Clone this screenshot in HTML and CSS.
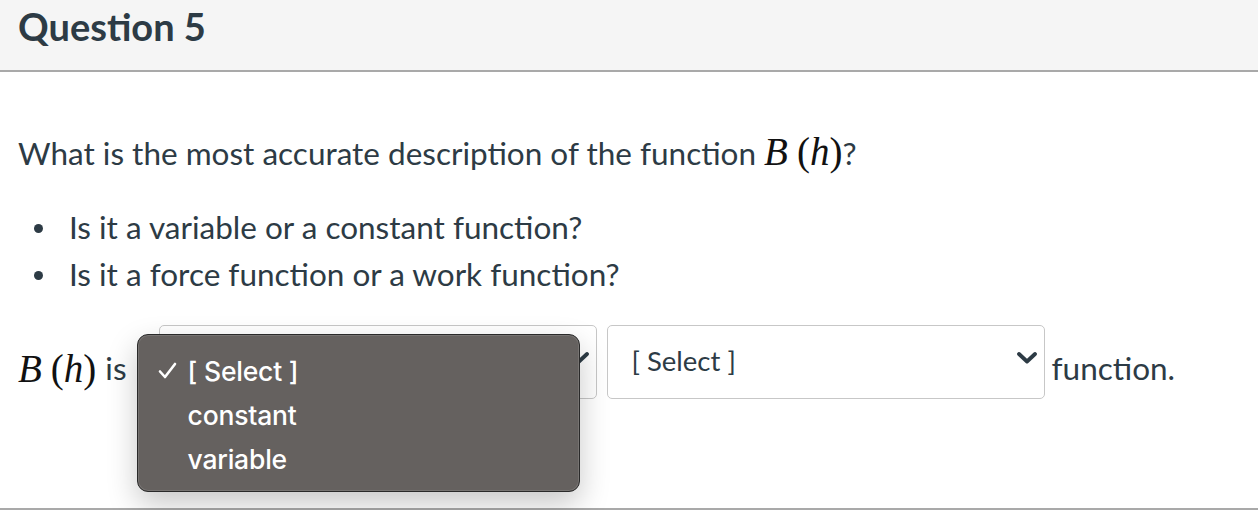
FILE: index.html
```html
<!DOCTYPE html>
<html>
  <head>
    <meta http-equiv="Content-type" content="text/html; charset=utf-8">
    <title>Question 5</title>
    <link rel="stylesheet" href="styles.css">
  </head>
  <body>
    <div class="question">
      <div class="question_header">
        <h2 class="question_title">Question 5</h2>
      </div>
      <div class="question_body">
        <p class="question_text">What is the most accurate description of the function <span class="math"><i>B</i><span class="paren">(<i>h</i>)</span></span>?</p>
        <ul class="hints">
          <li>Is it a variable or a constant function?</li>
          <li>Is it a force function or a work function?</li>
        </ul>
        <div class="answer_line">
          <span class="math lead"><i>B</i><span class="paren">(<i>h</i>)</span></span>
          <span class="word">is</span>
          <div class="select_wrap">
            <div class="select_box">
              <span class="select_label"></span>
              <svg class="chevron" width="20" height="12" viewBox="0 0 20 12"><path d="M2 2 L10 9.5 L18 2" fill="none" stroke="#2d3b45" stroke-width="3.8" stroke-linecap="round" stroke-linejoin="round"/></svg>
            </div>
            <div class="popup">
              <div class="popup_item"><svg class="tick" width="19" height="17" viewBox="0 0 19 17"><path d="M2 9.5 L7 15 L17 2" fill="none" stroke="#fff" stroke-width="2.6" stroke-linecap="round" stroke-linejoin="round"/></svg>[ Select ]</div>
              <div class="popup_item">constant</div>
              <div class="popup_item">variable</div>
            </div>
          </div>
          <div class="select_wrap second">
            <div class="select_box">
              <span class="select_label">[ Select ]</span>
              <svg class="chevron" width="20" height="12" viewBox="0 0 20 12"><path d="M2 2 L10 9.5 L18 2" fill="none" stroke="#2d3b45" stroke-width="3.8" stroke-linecap="round" stroke-linejoin="round"/></svg>
            </div>
          </div>
          <span class="word tail">function.</span>
        </div>
      </div>
    </div>
  </body>
</html>
```

FILE: styles.css
```css
body,html{margin:0; background:#fff;}
body{font-family:Lato,"Noto Sans",sans-serif; color:#2d3b45;}
.question{border-bottom:2px solid #a9a9a9; width:1258px;}
.question_header{height:72px; background:#f5f5f5; border-bottom:2px solid #a9a9a9; padding:0 18px; box-sizing:border-box;}
.question_title{margin:0; padding-top:3px; font-size:38px; font-weight:700; line-height:46px;}
.question_body{padding:0 18px 109px 18px;}
.question_text{margin:56px 0 0 0; font-size:31.5px; line-height:47px;}
.math{font-family:"Liberation Serif","Times New Roman",serif; font-size:39px; color:#111;}
.math i{font-style:italic;}
.paren{margin-left:9px;}
.hints{margin:27px 0 0 0; padding:0; list-style:none; font-size:31.5px; line-height:47px;}
.hints li{display:flex; align-items:center;}
.hints li::before{content:""; width:9px; height:9px; border-radius:50%; background:#2d3b45; margin:2px 26px 0 16px;}
.answer_line{display:flex; align-items:flex-start; margin-top:27px; font-size:31.5px; line-height:47px;}
.answer_line .lead{margin-top:20px; margin-right:9px;}
.word{margin-top:20px;}
.select_wrap{position:relative; margin-left:32px;}
.select_wrap.second{margin-left:10px;}
.tail{margin-left:7px;}
.select_box{width:438px; height:74px; box-sizing:border-box; border:1.5px solid #c7c7c7; border-radius:5px; background:#fff; display:flex; align-items:center; justify-content:space-between; padding:0 7px 0 24px;}
.select_label{font-size:27.5px; line-height:30px; margin-top:-2px;}
.chevron{margin-top:-8px;}
.popup{position:absolute; left:-22px; top:9px; width:443px; height:158px; box-sizing:border-box; background:#65615f; border:1px solid #2a2a2a; border-radius:11px; box-shadow:inset 0 0 0 1px rgba(255,255,255,0.12), 0 12px 30px rgba(0,0,0,0.22); padding-top:14px; font-family:Inter,"Liberation Sans",sans-serif; color:#fff; font-size:26.5px; font-weight:500;}
.popup_item{height:44px; line-height:44px; padding-left:50px; position:relative; letter-spacing:-0.2px;}
.tick{position:absolute; left:20px; top:13px;}
```
